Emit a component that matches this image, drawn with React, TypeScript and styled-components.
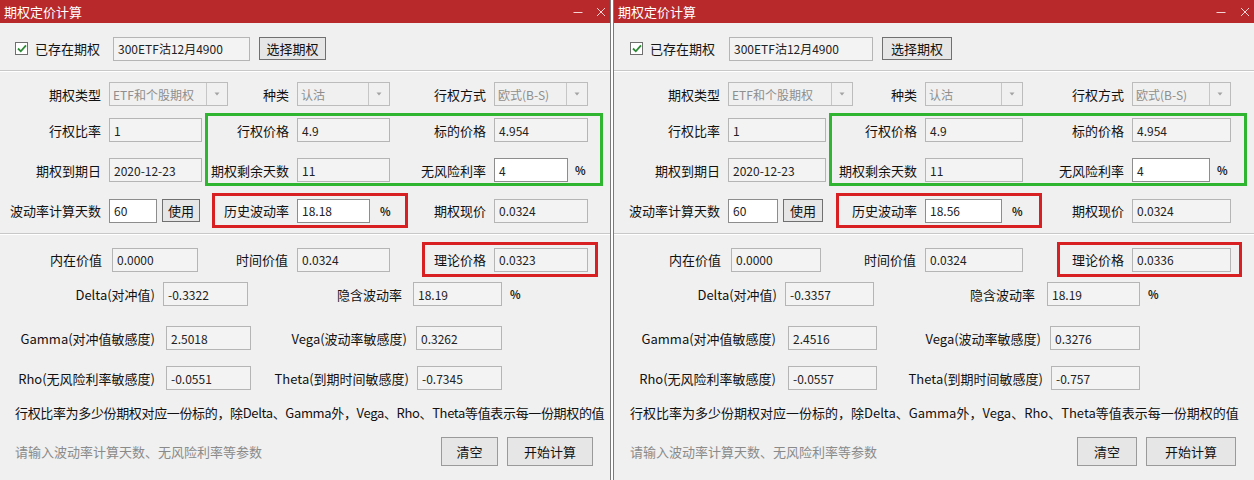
import React from "react";
import styled, { createGlobalStyle, ThemeProvider } from "styled-components";

// horizontal sizes are measured on the left dialog and scaled by theme.k
const kx = (n: number, theme: object) =>
  Math.round(n * ((theme as { k?: number }).k ?? 1));

type Sized = { $w: number; $ml?: number };

const GlobalStyle = createGlobalStyle`
  html, body {
    margin: 0;
    padding: 0;
    background: #fff;
  }
  body {
    font-family: "Noto Sans CJK SC", "Noto Sans", sans-serif;
    font-size: 13px;
    color: #151515;
  }
  * {
    box-sizing: border-box;
  }
`;

const Page = styled.div`
  display: flex;
  gap: 2px;
  width: 1254px;
  height: 480px;
  overflow: hidden;
  background: #fff;
`;

const Window = styled.section<{ $w: number; $side: "left" | "right" }>`
  width: ${(p) => p.$w}px;
  height: 480px;
  flex-shrink: 0;
  display: flex;
  flex-direction: column;
  overflow: hidden;
  background: #f0f0f0;
  border-left: ${(p) => (p.$side === "right" ? "1px solid #7b7b7b" : "none")};
  border-right: ${(p) => (p.$side === "left" ? "1px solid #7b7b7b" : "none")};
`;

const TitleBar = styled.header`
  height: 23px;
  flex-shrink: 0;
  display: flex;
  align-items: center;
  padding-left: 4px;
  background: #b8292b;
  color: #fff;
  font-size: 13px;
`;

const TitleControls = styled.div`
  margin-left: auto;
  display: flex;
  align-items: center;
  gap: ${(p) => kx(13, p.theme)}px;
  padding-right: ${(p) => kx(4, p.theme)}px;
`;

const TopRow = styled.div`
  height: 47px;
  padding-top: 4px;
  display: flex;
  align-items: center;
  padding-left: ${(p) => kx(15, p.theme)}px;
`;

const CheckBox = styled.span`
  width: 13px;
  height: 13px;
  flex-shrink: 0;
  display: flex;
  align-items: center;
  justify-content: center;
  border: 1px solid #6f6f6f;
  background: #fff;
`;

const CheckText = styled.span`
  margin-left: 7px;
  white-space: nowrap;
`;

const Divider = styled.hr<{ $mt?: number }>`
  margin: ${(p) => p.$mt ?? 0}px 0 0;
  height: 0;
  border: none;
  border-top: 1px solid #c8c8c8;
  border-bottom: 1px solid #fff;
`;

const Row = styled.div<{ $mt?: number; $h?: number }>`
  display: flex;
  align-items: center;
  height: ${(p) => p.$h ?? 24}px;
  margin-top: ${(p) => p.$mt ?? 0}px;
  flex-shrink: 0;
`;

const Label = styled.span<Sized & { $gap?: number }>`
  width: ${(p) => kx(p.$w, p.theme)}px;
  flex-shrink: 0;
  padding-right: ${(p) => kx(p.$gap ?? 8, p.theme)}px;
  text-align: right;
  white-space: nowrap;
  color: #111;
`;

const Field = styled.div<Sized & { $edit?: boolean }>`
  width: ${(p) => kx(p.$w, p.theme)}px;
  margin-left: ${(p) => kx(p.$ml ?? 0, p.theme)}px;
  height: 24px;
  flex-shrink: 0;
  display: flex;
  align-items: center;
  padding-left: 4px;
  overflow: hidden;
  white-space: nowrap;
  font-size: 12px;
  color: #222;
  border: 1px solid ${(p) => (p.$edit ? "#8d8d8d" : "#b5b5b5")};
  background: ${(p) => (p.$edit ? "#fff" : "#f3f3f3")};
`;

const Combo = styled.div<Sized>`
  width: ${(p) => kx(p.$w, p.theme)}px;
  height: 24px;
  flex-shrink: 0;
  display: flex;
  border: 1px solid #bcbcbc;
  background: #f0f0f0;
  color: #8e8e8e;
  font-size: 12px;
`;

const ComboText = styled.span`
  flex: 1;
  display: flex;
  align-items: center;
  padding-left: 3px;
  white-space: nowrap;
  overflow: hidden;
  border-right: 1px solid #c6c6c6;
`;

const ComboArrow = styled.span`
  width: 20px;
  display: flex;
  align-items: center;
  justify-content: center;
`;

const Unit = styled.span<{ $ml: number }>`
  margin-left: ${(p) => kx(p.$ml, p.theme)}px;
  font-size: 11px;
  font-weight: 700;
  color: #222;
`;

const Btn = styled.button<Sized & { $h?: number }>`
  width: ${(p) => kx(p.$w, p.theme)}px;
  height: ${(p) => p.$h ?? 23}px;
  margin-left: ${(p) => kx(p.$ml ?? 0, p.theme)}px;
  flex-shrink: 0;
  padding: 0;
  border: 1px solid ${(p) => ((p.$h ?? 23) > 25 ? "#9a9a9a" : "#707070")};
  background: #e6e6e6;
  font-family: inherit;
  font-size: 13px;
  color: #111;
  white-space: nowrap;
`;

const Split = styled.div`
  display: flex;
  align-items: flex-start;
  margin-top: 7px;
`;

const Column = styled.div`
  display: flex;
  flex-direction: column;
  gap: 16px;
  padding-top: 5px;
`;

const Highlight = styled.div<Sized & { $tone: "green" | "red" }>`
  width: ${(p) => kx(p.$w, p.theme)}px;
  margin-left: ${(p) => kx(p.$ml ?? 0, p.theme)}px;
  flex-shrink: 0;
  border: 3px solid ${(p) => (p.$tone === "green" ? "#2fb52f" : "#d81f22")};
`;

const GreenBox = styled(Highlight)`
  display: flex;
  flex-direction: column;
  gap: 16px;
  padding: 2px 0 1px;
`;

const RedBox = styled(Highlight)`
  height: 35px;
  display: flex;
  align-items: center;
`;

const Note = styled.p`
  margin: 13px 0 0;
  height: 20px;
  line-height: 20px;
  padding-left: ${(p) => kx(15, p.theme)}px;
  white-space: nowrap;
  font-size: 13px;
  letter-spacing: ${(p) => (kx(100, p.theme) > 100 ? "0" : "-0.35px")};
  color: #111;
`;

const BottomRow = styled.div`
  display: flex;
  align-items: center;
  height: 29px;
  margin-top: 14px;
  padding-left: ${(p) => kx(15, p.theme)}px;
  padding-right: ${(p) => kx(17, p.theme)}px;
`;

const Hint = styled.span`
  color: #8a8a8a;
  white-space: nowrap;
  margin-right: auto;
`;

type Calc = {
  hv: string;
  time: string;
  theory: string;
  delta: string;
  iv: string;
  gamma: string;
  vega: string;
  rho: string;
  theta: string;
};

const Arrow = () => (
  <svg width="6" height="4" viewBox="0 0 6 4">
    <path d="M0.5 0.5 L3 3.5 L5.5 0.5 Z" fill="#a3a3a3" />
  </svg>
);

const Check = () => (
  <svg width="10" height="9" viewBox="0 0 10 9">
    <path d="M1 4.5 L3.8 7.3 L9 1.3" stroke="#2d8a35" strokeWidth="1.8" fill="none" />
  </svg>
);

const Minimize = () => (
  <svg width="10" height="10" viewBox="0 0 10 10">
    <path d="M0.5 5.5 H9.5" stroke="#f4d4d4" strokeWidth="1" />
  </svg>
);

const Close = () => (
  <svg width="10" height="10" viewBox="0 0 10 10">
    <path d="M1 1 L9 9 M9 1 L1 9" stroke="#f4d4d4" strokeWidth="1" />
  </svg>
);

function Dialog({ k, w, side, d }: { k: number; w: number; side: "left" | "right"; d: Calc }) {
  return (
    <ThemeProvider theme={{ k }}>
      <Window $w={w} $side={side}>
        <TitleBar>
          期权定价计算
          <TitleControls>
            <Minimize />
            <Close />
          </TitleControls>
        </TitleBar>

        <TopRow>
          <CheckBox>
            <Check />
          </CheckBox>
          <CheckText>已存在期权</CheckText>
          <Field $w={137} $ml={13}>300ETF沽12月4900</Field>
          <Btn $w={67} $ml={9}>选择期权</Btn>
        </TopRow>
        <Divider />

        <Row $mt={10}>
          <Label $w={109}>期权类型</Label>
          <Combo $w={119}>
            <ComboText>ETF和个股期权</ComboText>
            <ComboArrow><Arrow /></ComboArrow>
          </Combo>
          <Label $w={69}>种类</Label>
          <Combo $w={93}>
            <ComboText>认沽</ComboText>
            <ComboArrow><Arrow /></ComboArrow>
          </Combo>
          <Label $w={104}>行权方式</Label>
          <Combo $w={94}>
            <ComboText>欧式(B-S)</ComboText>
            <ComboArrow><Arrow /></ComboArrow>
          </Combo>
        </Row>

        <Split>
          <Column>
            <Row>
              <Label $w={109}>行权比率</Label>
              <Field $w={93}>1</Field>
            </Row>
            <Row>
              <Label $w={109}>期权到期日</Label>
              <Field $w={93}>2020-12-23</Field>
            </Row>
          </Column>
          <GreenBox $tone="green" $w={398} $ml={3}>
            <Row>
              <Label $w={89}>行权价格</Label>
              <Field $w={93}>4.9</Field>
              <Label $w={104}>标的价格</Label>
              <Field $w={94}>4.954</Field>
            </Row>
            <Row>
              <Label $w={89}>期权剩余天数</Label>
              <Field $w={93}>11</Field>
              <Label $w={104}>无风险利率</Label>
              <Field $w={74} $edit>4</Field>
              <Unit $ml={7}>%</Unit>
            </Row>
          </GreenBox>
        </Split>

        <Row $mt={7} $h={35}>
          <Label $w={109}>波动率计算天数</Label>
          <Field $w={48} $edit>60</Field>
          <Btn $w={38} $ml={5}>使用</Btn>
          <RedBox $tone="red" $w={196} $ml={12}>
            <Label $w={82}>历史波动率</Label>
            <Field $w={73} $edit>{d.hv}</Field>
            <Unit $ml={10}>%</Unit>
          </RedBox>
          <Label $w={86}>期权现价</Label>
          <Field $w={94}>0.0324</Field>
        </Row>

        <Divider $mt={5} />

        <Row $mt={7} $h={35}>
          <Label $w={112} $gap={10}>内在价值</Label>
          <Field $w={86}>0.0000</Field>
          <Label $w={99} $gap={9}>时间价值</Label>
          <Field $w={93}>{d.time}</Field>
          <RedBox $tone="red" $w={176} $ml={32}>
            <Label $w={69}>理论价格</Label>
            <Field $w={94}>{d.theory}</Field>
          </RedBox>
        </Row>

        <Row $mt={5}>
          <Label $w={163}>Delta(对冲值)</Label>
          <Field $w={85}>{d.delta}</Field>
          <Label $w={165} $gap={11}>隐含波动率</Label>
          <Field $w={89}>{d.iv}</Field>
          <Unit $ml={8}>%</Unit>
        </Row>

        <Row $mt={20}>
          <Label $w={166} $gap={11}>Gamma(对冲值敏感度)</Label>
          <Field $w={85}>{d.gamma}</Field>
          <Label $w={165} $gap={9}>Vega(波动率敏感度)</Label>
          <Field $w={86}>{d.vega}</Field>
        </Row>

        <Row $mt={16}>
          <Label $w={166} $gap={11}>Rho(无风险利率敏感度)</Label>
          <Field $w={85}>{d.rho}</Field>
          <Label $w={166}>Theta(到期时间敏感度)</Label>
          <Field $w={85}>{d.theta}</Field>
        </Row>

        <Note>
          行权比率为多少份期权对应一份标的，除Delta、Gamma外，Vega、Rho、Theta等值表示每一份期权的值
        </Note>

        <BottomRow>
          <Hint>请输入波动率计算天数、无风险利率等参数</Hint>
          <Btn $w={57} $h={29}>清空</Btn>
          <Btn $w={86} $h={29} $ml={9}>开始计算</Btn>
        </BottomRow>
      </Window>
    </ThemeProvider>
  );
}

const before: Calc = {
  hv: "18.18",
  time: "0.0324",
  theory: "0.0323",
  delta: "-0.3322",
  iv: "18.19",
  gamma: "2.5018",
  vega: "0.3262",
  rho: "-0.0551",
  theta: "-0.7345",
};

const after: Calc = {
  hv: "18.56",
  time: "0.0324",
  theory: "0.0336",
  delta: "-0.3357",
  iv: "18.19",
  gamma: "2.4516",
  vega: "0.3276",
  rho: "-0.0557",
  theta: "-0.757",
};

export default function App() {
  return (
    <>
      <GlobalStyle />
      <Page>
        <Dialog k={1} w={611} side="left" d={before} />
        <Dialog k={1.049} w={641} side="right" d={after} />
      </Page>
    </>
  );
}
